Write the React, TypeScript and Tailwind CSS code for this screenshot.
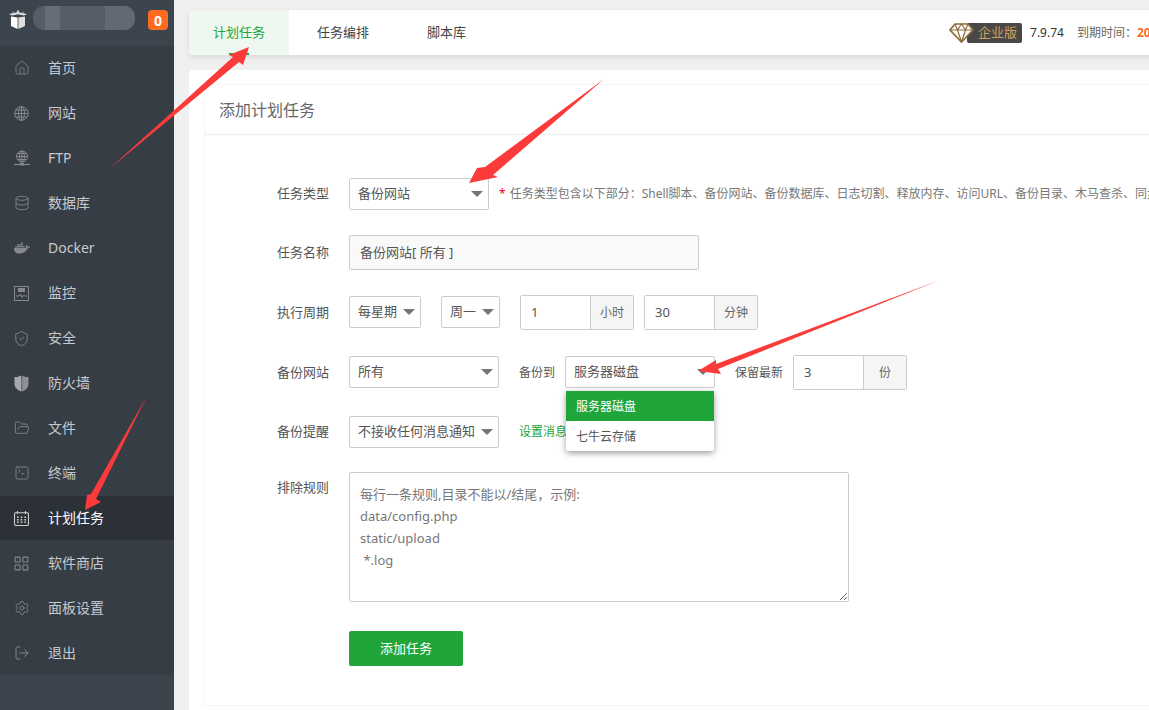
import React from "react";
import { Home, Database, ShieldCheck, FolderOpen, SquareTerminal, LayoutGrid, Settings, LogOut } from "lucide-react";
import { FaDocker } from "react-icons/fa";

const FtpIcon = () => (
  <svg width="16" height="16" viewBox="0 0 16 16" fill="none" stroke="currentColor" strokeWidth="1">
    <circle cx="8" cy="6.5" r="5.5" />
    <ellipse cx="8" cy="6.5" rx="2.5" ry="5.5" />
    <path d="M2.5 6.5h11M3.5 3.5h9M3.5 9.5h9M8 1v11" />
    <path d="M0 14.5h16" strokeWidth="1.2" />
    <rect x="6" y="13" width="4" height="2.5" fill="currentColor" stroke="none" />
  </svg>
);
const GlobeGrid = () => (
  <svg width="15" height="15" viewBox="0 0 15 15" fill="none" stroke="currentColor" strokeWidth="1">
    <circle cx="7.5" cy="7.5" r="6.8" />
    <ellipse cx="7.5" cy="7.5" rx="3" ry="6.8" />
    <path d="M0.7 7.5h13.6M1.8 4h11.4M1.8 11h11.4M7.5 0.7v13.6" />
  </svg>
);
const MonitorIcon = () => (
  <svg width="15" height="15" viewBox="0 0 15 15" fill="none" stroke="currentColor" strokeWidth="1">
    <rect x="0.5" y="0.5" width="14" height="14" />
    <rect x="4" y="2" width="7" height="4" fill="currentColor" stroke="none" />
    <path d="M2 10h3l1.5-2 1.5 3.5 1.5-2.5 1 1h2.5" />
  </svg>
);
const WallIcon = () => (
  <svg width="15" height="17" viewBox="0 0 15 17">
    <path d="M0.5 2 L4 2 L5.5 0.5 L7.5 1.5 V16.5 C3 15 0.5 12.5 0.5 8.5 Z" fill="#a6a9ad" />
    <path d="M14.5 2 L11 2 L9.5 0.5 L8.2 1.5 V16.5 C12 15 14.5 12.5 14.5 8.5 Z" fill="#8d9196" />
  </svg>
);
const CalendarIcon = () => (
  <svg width="15" height="15" viewBox="0 0 15 15" fill="none" stroke="currentColor" strokeWidth="1.1">
    <rect x="0.5" y="1.8" width="14" height="12.7" rx="1.5" />
    <path d="M3.5 0v3M11.5 0v3" />
    <path d="M3 6.2h1.6M6.7 6.2h1.6M10.4 6.2H12M3 8.7h1.6M6.7 8.7h1.6M10.4 8.7H12M3 11.2h1.6M6.7 11.2h1.6M10.4 11.2H12" strokeWidth="1.4" />
  </svg>
);

const navItems: { label: string; icon: React.ReactNode; active?: boolean }[] = [
  { label: "首页", icon: <Home size={16} strokeWidth={1.2} /> },
  { label: "网站", icon: <GlobeGrid /> },
  { label: "FTP", icon: <FtpIcon /> },
  { label: "数据库", icon: <Database size={16} strokeWidth={1.3} /> },
  { label: "Docker", icon: <FaDocker size={16} /> },
  { label: "监控", icon: <MonitorIcon /> },
  { label: "安全", icon: <ShieldCheck size={17} strokeWidth={1.3} /> },
  { label: "防火墙", icon: <WallIcon /> },
  { label: "文件", icon: <FolderOpen size={16} strokeWidth={1.3} /> },
  { label: "终端", icon: <SquareTerminal size={16} strokeWidth={1.3} /> },
  { label: "计划任务", icon: <CalendarIcon />, active: true },
  { label: "软件商店", icon: <LayoutGrid size={17} strokeWidth={1.5} /> },
  { label: "面板设置", icon: <Settings size={16} strokeWidth={1.2} /> },
  { label: "退出", icon: <LogOut size={16} strokeWidth={1.4} /> },
];

const Caret = () => (
  <span className="ml-auto h-0 w-0 shrink-0 border-x-[6px] border-t-[6px] border-x-transparent border-t-[#757575]" />
);

const Select = ({ label, w, cls = "", children }: { label: string; w: string; cls?: string; children?: React.ReactNode }) => (
  <div className={`relative flex h-[32px] shrink-0 items-center rounded-[2px] border border-[#ccc] bg-white pl-[8px] pr-[5px] text-[13px] text-[#555] ${w} ${cls}`}>
    <span className="whitespace-nowrap">{label}</span>
    <Caret />
    {children}
  </div>
);

const Group = ({ value, unit }: { value: string; unit: string }) => (
  <div className="flex h-[35px] w-[114px] shrink-0 rounded-[2px] border border-[#ccc] text-[13px] text-[#555]">
    <div className="flex w-[69px] items-center bg-white pl-[10px]">{value}</div>
    <div className="flex flex-1 items-center justify-center border-l border-[#ccc] bg-[#f5f5f5] text-[12px] text-[#666]">{unit}</div>
  </div>
);

const Label = ({ children, h = "h-[32px]" }: { children: React.ReactNode; h?: string }) => (
  <div className={`flex w-[72px] shrink-0 items-center text-[13px] text-[#555] ${h}`}>{children}</div>
);

export default function App() {
  return (
    <div
      className="relative flex h-screen w-full overflow-hidden bg-[#f0f0f0]"
      style={{ fontFamily: '"Noto Sans","Noto Sans CJK SC",sans-serif' }}
    >
      <aside className="flex w-[174px] shrink-0 flex-col bg-[#3c444d]">
        <div className="flex h-[46px] shrink-0 items-start pl-[9px] pt-[6px]">
          <svg width="18" height="24" viewBox="0 0 18 24" className="shrink-0">
            <path d="M9 4 L10.5 6.5 L18 8 L15 9.5 L9 8.2 L3 9.5 L0 8 L7.5 6.5 Z" fill="#e4e4e4" />
            <path d="M4 5.5 V9 M14 5.5 V9 M9 4 V8" stroke="#cfcfcf" strokeWidth="0.8" />
            <path d="M2 10.5 L8.6 11.5 V23 L2 20 Z" fill="#ffffff" />
            <path d="M16 10.5 L9.4 11.5 V23 L16 20 Z" fill="#dedede" />
          </svg>
          <div className="ml-[6px] flex h-[24px] w-[102px] shrink-0 overflow-hidden rounded-[11px] bg-[#565d66]">
            <div className="ml-[12px] h-full w-[15px] bg-[#666d77]" />
            <div className="ml-[45px] h-full w-[30px] bg-[#626973]" />
          </div>
          <div className="ml-[13px] mt-[4px] flex h-[20px] w-[20px] shrink-0 items-center justify-center rounded-[4px] bg-[#ff6c1f] text-[14px] font-bold text-white">
            0
          </div>
        </div>
        <nav className="flex flex-col gap-[1px] bg-[#373d45]">
          {navItems.map((n) => (
            <div
              key={n.label}
              className={`flex h-[44px] items-center text-[14px] ${n.active ? "bg-[#2c3138] text-white" : "text-[#c6cacf]"}`}
            >
              <span className={`flex w-[48px] shrink-0 justify-center pr-[5px] ${n.active ? "text-[#cfcfcf]" : "text-[#85898e]"}`}>{n.icon}</span>
              <span className="pb-[2px]">{n.label}</span>
            </div>
          ))}
        </nav>
      </aside>

      <main className="min-w-0 flex-1 overflow-hidden pl-[15px] pt-[10px]">
        <div className="flex h-[45px] w-[1100px] items-center rounded-[4px] bg-white text-[13px] shadow-[0_2px_6px_rgba(0,0,0,0.1)]">
          <div className="relative flex h-full w-[100px] shrink-0 items-center justify-center rounded-l-[4px] bg-[#eef8f1] text-[#20a53a]">
            计划任务
            <span className="absolute bottom-0 left-[40px] h-[2px] w-[20px] bg-[#20a53a]" />
          </div>
          <span className="ml-[28px] shrink-0 text-[#444]">任务编排</span>
          <span className="ml-[58px] shrink-0 text-[#444]">脚本库</span>
          <div className="ml-[483px] flex shrink-0 items-center text-[12px]">
            <svg width="25" height="20" viewBox="0 0 25 20" fill="#fff" stroke="#8a6d3b" strokeWidth="1.7" className="relative z-10">
              <path d="M6 1 H19 L24 7 L12.5 19 L1 7 Z" />
              <path d="M1 7 H24 M6 1 L8.5 7 L12.5 19 L16.5 7 L19 1 M8.5 7 L12.5 1 L16.5 7" fill="none" strokeWidth="1.2" />
            </svg>
            <span className="-ml-[7px] flex h-[20px] w-[55px] items-center justify-center rounded-[2px] bg-[#4a4844] pl-[6px] text-[13px] text-[#c9a063]">
              企业版
            </span>
            <span className="ml-[8px] text-[#333]">7.9.74</span>
            <span className="ml-[13px] text-[#666]">到期时间：</span>
            <span className="font-bold text-[#ff6c1f]">2026-08-18</span>
          </div>
        </div>

        <div className="mt-[15px] h-[650px] w-[1100px] rounded-[4px] bg-white pl-[15px] pt-[14px]">
          <div className="h-[622px] border border-[#f5f5f5]">
            <div className="flex h-[50px] items-center border-b border-[#eee] pl-[14px] text-[16px] text-[#666]">添加计划任务</div>
            <div className="pl-[72px] pt-[43px]">
              <div className="flex items-center">
                <Label>任务类型</Label>
                <Select label="备份网站" w="w-[140px]" />
                <span className="ml-[10px] mr-[4px] text-[12px] text-[#f00]">*</span>
                <span className="whitespace-nowrap text-[12px] text-[#777]">
                  任务类型包含以下部分：Shell脚本、备份网站、备份数据库、日志切割、释放内存、访问URL、备份目录、木马查杀、同步时间
                </span>
              </div>

              <div className="mt-[25px] flex items-center">
                <Label h="h-[35px]">任务名称</Label>
                <div className="flex h-[35px] w-[350px] items-center rounded-[2px] border border-[#ccc] bg-[#f9f9f9] pl-[10px] text-[13px] text-[#555]">
                  备份网站[ 所有 ]
                </div>
              </div>

              <div className="mt-[25px] flex items-start">
                <Label h="h-[35px]">执行周期</Label>
                <Select label="每星期" w="w-[72px]" cls="mt-[1px]" />
                <Select label="周一" w="w-[59px]" cls="ml-[20px] mt-[1px]" />
                <div className="ml-[20px]">
                  <Group value="1" unit="小时" />
                </div>
                <div className="ml-[10px]">
                  <Group value="30" unit="分钟" />
                </div>
              </div>

              <div className="mt-[25px] flex items-start">
                <Label h="h-[35px]">备份网站</Label>
                <Select label="所有" w="w-[150px]" cls="mt-[1px]" />
                <span className="ml-[20px] flex h-[35px] w-[46px] shrink-0 items-center text-[12px] text-[#555]">备份到</span>
                <Select label="服务器磁盘" w="w-[150px]" cls="mt-[1px]">
                  <div className="absolute left-0 top-[34px] z-10 w-[148px] rounded-[2px] bg-white text-[12px] text-[#555] shadow-[0_2px_6px_rgba(0,0,0,0.4)]">
                    <div className="flex h-[30px] items-center bg-[#20a53a] pl-[10px] pt-[1px] text-white">服务器磁盘</div>
                    <div className="flex h-[30px] items-center pl-[10px] pt-[1px]">七牛云存储</div>
                  </div>
                </Select>
                <span className="ml-[20px] flex h-[35px] w-[58px] shrink-0 items-center text-[12px] text-[#555]">保留最新</span>
                <Group value="3" unit="份" />
              </div>

              <div className="mt-[26px] flex items-center">
                <Label>备份提醒</Label>
                <Select label="不接收任何消息通知" w="w-[150px]" />
                <span className="ml-[20px] whitespace-nowrap text-[12px] text-[#20a53a]">设置消息通道</span>
              </div>

              <div className="mt-[24px] flex items-start">
                <Label>排除规则</Label>
                <textarea
                  className="h-[130px] w-[500px] rounded-[2px] border border-[#ccc] p-[10px] text-[13px] leading-[22px] outline-none placeholder:text-[#777]"
                  placeholder={"每行一条规则,目录不能以/结尾，示例:\ndata/config.php\nstatic/upload\n *.log"}
                />
              </div>

              <div className="ml-[72px] mt-[29px] flex h-[35px] w-[114px] items-center justify-center rounded-[2px] bg-[#20a53a] text-[13px] text-white">
                添加任务
              </div>
            </div>
          </div>
        </div>
      </main>

      <svg className="pointer-events-none absolute inset-0 z-20" width="1149" height="710" fill="#fb3a3a">
        <polygon points="108,170 233,57 229,55 249,47 243,65 239,62" />
        <polygon points="604,79 493,175 498,177 469,183 477,168 485,167" />
        <polygon points="940,280 718,369 721,374 698,371 716,360 716,364" />
        <polygon points="147,396 96,499 101,502 85,510 87,495 91,494" />
      </svg>
    </div>
  );
}
